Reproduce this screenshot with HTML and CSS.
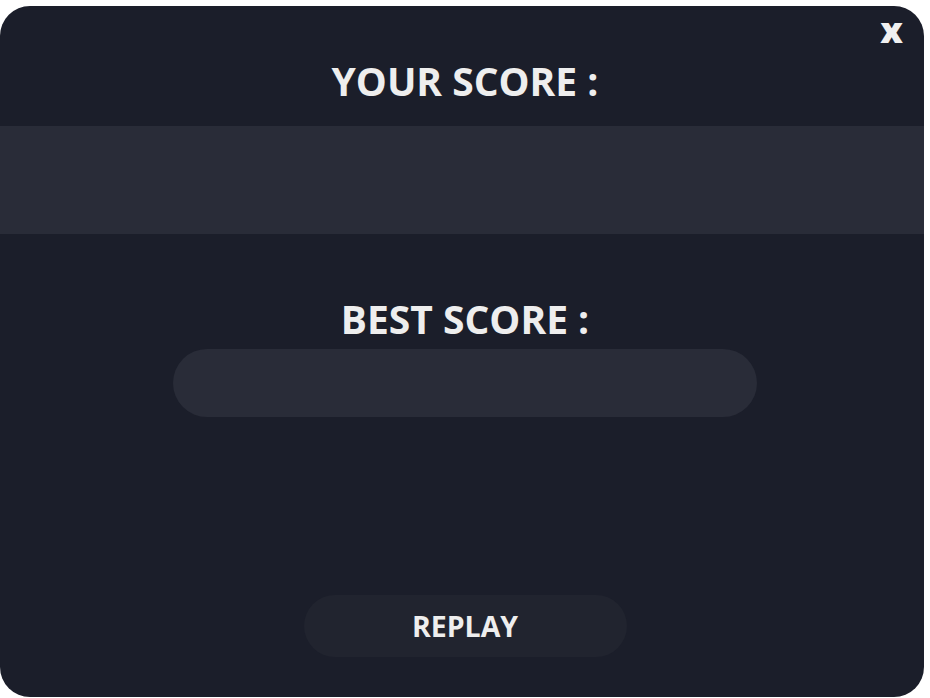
FILE: index.html
```html
<!DOCTYPE html>
<html lang="en">
<head>
<meta charset="utf-8">
<title>Score</title>
<link rel="stylesheet" href="styles.css">
</head>
<body>
<div class="dialog">
  <button class="close">x</button>
  <h2 class="title title-your">YOUR SCORE :</h2>
  <div class="score-bar"></div>
  <h2 class="title title-best">BEST SCORE :</h2>
  <div class="best-pill"></div>
  <button class="replay">REPLAY</button>
</div>
</body>
</html>
```
FILE: styles.css
```css
html, body {
  margin: 0;
  padding: 0;
  background: #ffffff;
}
body {
  padding-top: 6px;
  font-family: "Open Sans", "Noto Sans", sans-serif;
}
.dialog {
  position: relative;
  width: 924px;
  height: 691px;
  box-sizing: border-box;
  padding-left: 6px;
  background: #1b1e2a;
  border-radius: 30px;
  display: flex;
  flex-direction: column;
  align-items: center;
}
.close {
  position: absolute;
  top: 4px;
  right: 21px;
  background: none;
  border: none;
  padding: 0;
  color: #f0f0f0;
  font-family: "Open Sans", sans-serif;
  font-weight: 800;
  font-size: 36px;
  line-height: 40px;
  cursor: pointer;
}
.title {
  margin: 0;
  color: #eeeeee;
  font-weight: 700;
  font-size: 39px;
  line-height: 48px;
  letter-spacing: 0;
  text-align: center;
}
.title-your {
  margin-top: 51px;
}
.score-bar {
  align-self: stretch;
  margin-left: -6px;
  height: 108px;
  margin-top: 21px;
  background: #292c38;
}
.title-best {
  margin-top: 61px;
}
.best-pill {
  width: 584px;
  height: 68px;
  margin-top: 6px;
  border-radius: 34px;
  background: #292c38;
}
.replay {
  width: 323px;
  height: 62px;
  margin-top: 178px;
  border: none;
  border-radius: 31px;
  background: #21242f;
  color: #eeeeee;
  font-family: "Open Sans", sans-serif;
  font-weight: 700;
  font-size: 28.5px;
  letter-spacing: 0;
  cursor: pointer;
}
```
